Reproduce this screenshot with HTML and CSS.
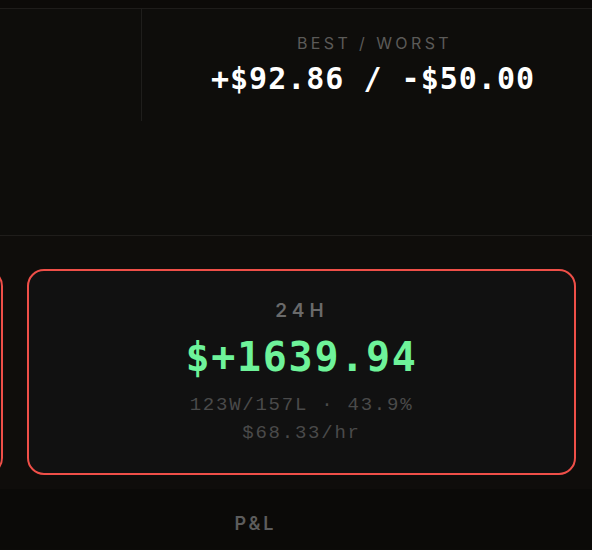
FILE: index.html
```html
<!DOCTYPE html>
<html>
<head>
<meta charset="utf-8">
<link rel="stylesheet" href="styles.css">
</head>
<body>
<div class="topbar"></div>
<section class="stats">
  <div class="stats-row">
    <div class="stat stat-empty"></div>
    <div class="divider"></div>
    <div class="stat">
      <div class="stat-label">BEST / WORST</div>
      <div class="stat-value">+$92.86 / -$50.00</div>
    </div>
  </div>
</section>
<section class="cards">
  <div class="card-track">
    <div class="card card-prev"></div>
    <div class="card">
      <div class="card-label">24H</div>
      <div class="card-value">$+1639.94</div>
      <div class="card-sub">123W/157L · 43.9%</div>
      <div class="card-sub">$68.33/hr</div>
    </div>
  </div>
</section>
<nav class="bottom-nav">
  <div class="nav-item">P&amp;L</div>
</nav>
</body>
</html>
```
FILE: styles.css
```css
html, body {
  margin: 0;
  padding: 0;
  background: #0c0b09;
  overflow: hidden;
}
body {
  width: 592px;
  height: 550px;
  font-family: "Inter", "Liberation Sans", sans-serif;
}
.topbar {
  height: 8px;
  background: #0c0a08;
  border-bottom: 1px solid #1e1c1a;
}
.stats {
  height: 226px;
  background: #0e0d0b;
  border-bottom: 1px solid #1f1d1b;
}
.stats-row {
  display: grid;
  grid-template-columns: 141px 1px 1fr;
  height: 112px;
}
.divider {
  background: #1f1e1c;
}
.stat {
  display: flex;
  flex-direction: column;
  align-items: center;
  padding-top: 26px;
  padding-left: 12px;
}
.stat-label {
  font-size: 16px;
  letter-spacing: 3.4px;
  color: #5b5a58;
  line-height: 16px;
  padding-left: 3px;
}
.stat-value {
  margin-top: 12px;
  font-family: "DejaVu Sans Mono", monospace;
  font-weight: 700;
  font-size: 30px;
  letter-spacing: 1px;
  color: #ffffff;
  line-height: 32px;
}
.cards {
  height: 253px;
  background: #0f0d0b;
  padding-top: 33px;
  box-sizing: border-box;
}
.card-track {
  display: flex;
  gap: 24px;
  margin-left: -546px;
}
.card {
  flex: 0 0 auto;
  width: 549px;
  height: 206px;
  box-sizing: border-box;
  border: 2px solid #ef4f48;
  border-radius: 17px;
  background: #111111;
  display: flex;
  flex-direction: column;
  align-items: center;
  padding-top: 29px;
}
.card-label {
  font-size: 19px;
  font-weight: 600;
  letter-spacing: 5px;
  color: #6a6a6a;
  line-height: 22px;
  padding-left: 1px;
}
.card-value {
  margin-top: 14px;
  font-family: "DejaVu Sans Mono", monospace;
  font-weight: 700;
  font-size: 40px;
  letter-spacing: 1.7px;
  color: #6ef39a;
  line-height: 42px;
}
.card-sub {
  font-family: "Liberation Mono", monospace;
  font-size: 19px;
  letter-spacing: 1.75px;
  color: #4a4a4a;
  line-height: 28px;
}
.card-value + .card-sub {
  margin-top: 13px;
}
.bottom-nav {
  height: 60px;
  background: #0b0a08;
  display: flex;
}
.nav-item {
  width: 511px;
  text-align: center;
  padding-top: 25px;
  font-size: 18px;
  font-weight: 600;
  letter-spacing: 3px;
  color: #5c5c5c;
  line-height: 20px;
}
```
